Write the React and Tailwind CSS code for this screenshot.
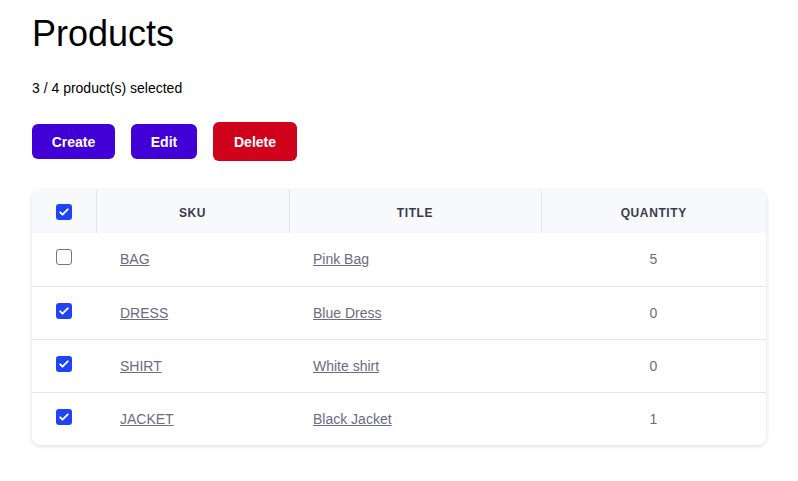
const products = [
  { sku: 'BAG', title: 'Pink Bag', quantity: 5, checked: false },
  { sku: 'DRESS', title: 'Blue Dress', quantity: 0, checked: true },
  { sku: 'SHIRT', title: 'White shirt', quantity: 0, checked: true },
  { sku: 'JACKET', title: 'Black Jacket', quantity: 1, checked: true },
]

function Checkbox({ checked }) {
  if (!checked) {
    return <div className="w-4 h-4 rounded-[3px] border border-[#767676] bg-white" />
  }
  return (
    <div className="w-4 h-4 rounded-[3px] bg-[#1e44f5] flex items-center justify-center">
      <svg viewBox="0 0 16 16" className="w-3 h-3" fill="none">
        <path d="M3 8.5l3 3 7-7" stroke="white" strokeWidth="2.6" strokeLinecap="round" strokeLinejoin="round" />
      </svg>
    </div>
  )
}

export default function App() {
  return (
    <div className="px-8 pt-[12px] bg-white min-h-[481px] text-black" style={{ fontFamily: '"Liberation Sans", sans-serif' }}>
      <h1 className="text-[36px] leading-[44px]">Products</h1>
      <p className="text-sm mt-[22px]">3 / 4 product(s) selected</p>
      <div className="flex items-center mt-[24px]">
        <button className="h-[35px] w-[83px] rounded-md bg-[#4000d6] text-white text-sm font-bold">Create</button>
        <button className="h-[35px] w-[66px] ml-4 rounded-md bg-[#4000d6] text-white text-sm font-bold">Edit</button>
        <button className="h-[39px] w-[84px] ml-4 rounded-md bg-[#d0011b] text-white text-sm font-bold">Delete</button>
      </div>
      <div className="mt-[29px] rounded-lg shadow-[0_1px_4px_rgba(0,0,0,0.15)] overflow-hidden">
        <table className="w-full border-collapse text-sm">
          <thead>
            <tr className="bg-[#f8f9fb] h-[43px]">
              <th className="w-[64px] pl-6 text-left align-middle"><Checkbox checked /></th>
              <th className="w-[193px] pt-1 border-l border-[#e3e5ea] text-[12px] font-bold tracking-wider text-[#3a3a4c]">SKU</th>
              <th className="w-[252px] pt-1 border-l border-[#e3e5ea] text-[12px] font-bold tracking-wider text-[#3a3a4c]">TITLE</th>
              <th className="pt-1 border-l border-[#e3e5ea] text-[12px] font-bold tracking-wider text-[#3a3a4c]">QUANTITY</th>
            </tr>
          </thead>
          <tbody>
            {products.map((p, i) => (
              <tr key={p.sku} className={`h-[53px] ${i > 0 ? 'border-t border-[#e5e6ec]' : ''}`}>
                <td className="pl-6 align-middle"><div className="-mt-1"><Checkbox checked={p.checked} /></div></td>
                <td className="pl-6 text-[#6b6b82]"><a className="underline">{p.sku}</a></td>
                <td className="pl-6 text-[#6b6b82]"><a className="underline">{p.title}</a></td>
                <td className="text-center text-[#6b6b82]">{p.quantity}</td>
              </tr>
            ))}
          </tbody>
        </table>
      </div>
    </div>
  )
}
